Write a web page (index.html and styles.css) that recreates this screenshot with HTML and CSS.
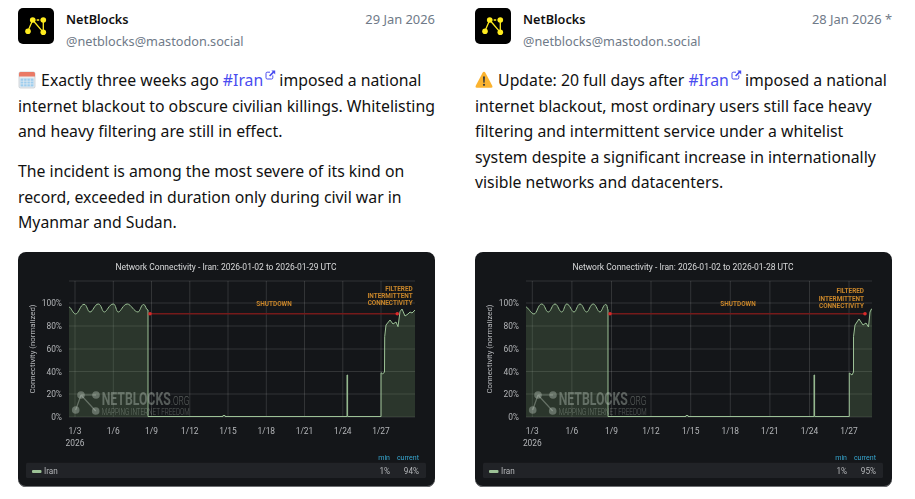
FILE: index.html
```html
<!DOCTYPE html>
<html lang="en">
<head>
  <meta charset="UTF-8" />
  <meta name="viewport" content="width=device-width, initial-scale=1.0"/>
  <title>NetBlocks posts</title>
  <link rel="stylesheet" href="styles.css">
</head>
<body>
  <svg class="defs" width="0" height="0" aria-hidden="true">
    <symbol id="nb-logo" viewBox="0 0 36 36">
      <rect width="36" height="36" rx="5" fill="#000"/>
      <path d="M14.7 12 10 23M14.7 12 25.3 24.3M25.3 12V24.3" stroke="#ffec1f" stroke-width="1.3" fill="none"/>
      <path d="M14.7 12H25.3" stroke="#ffec1f" stroke-width="1.3" stroke-dasharray="2.5 1.5" fill="none"/>
      <circle cx="14.7" cy="12" r="2.8" fill="#ffec1f"/>
      <circle cx="25.3" cy="12" r="2.8" fill="#ffec1f"/>
      <circle cx="10" cy="23.3" r="2.8" fill="#ffec1f"/>
      <circle cx="25.3" cy="24.3" r="2.8" fill="#ffec1f"/>
    </symbol>
    <symbol id="ext-link" viewBox="0 0 11 10">
      <path d="M5 2.2H2.2Q1 2.2 1 3.4V7.8Q1 9 2.2 9H6.6Q7.8 9 7.8 7.8V5.4" fill="none" stroke="currentColor" stroke-width="1"/>
      <path d="M6.4 .6H10.2V4.4L8.8 3 5.2 6.6 4 5.4 7.6 1.8Z" fill="currentColor"/>
    </symbol>
  </svg>

  <main class="posts">
    <article class="post">
      <header class="post-head">
        <svg class="avatar" width="36" height="36"><use href="#nb-logo"/></svg>
        <div class="who">
          <div class="name">NetBlocks</div>
          <div class="handle">@netblocks@mastodon.social</div>
        </div>
        <div class="date">29 Jan 2026</div>
      </header>
      <div class="post-body">
        <p>
          <svg class="emoji" width="18" height="18" viewBox="0 0 18 18">
            <rect x="1" y="1" width="16" height="16" rx="1.5" fill="#e8eef2" stroke="#b6bcc2" stroke-width=".6"/>
            <path d="M1 2.5Q1 1 2.5 1H15.5Q17 1 17 2.5V5.5H1Z" fill="#ea7a66"/>
            <path d="M2.5 7.5H15.5V15.5H2.5Z" fill="#9ccdee"/>
            <path d="M2.5 10.2H15.5M2.5 12.9H15.5M5.700 7.500V15.500M9 7.500V15.500M12.300 7.500V15.500" stroke="#e8eef2" stroke-width=".7"/>
          </svg>
          Exactly three weeks ago <a class="tag" href="#">#Iran<svg class="ext" width="11" height="10"><use href="#ext-link"/></svg></a> imposed a national internet blackout to obscure civilian killings. Whitelisting and heavy filtering are still in effect.
        </p>
        <p>The incident is among the most severe of its kind on record, exceeded in duration only during civil war in Myanmar and Sudan.</p>
      </div>
      <figure class="chart">
        <svg width="417" height="235" viewBox="0 0 417 235">
          <text class="title" x="208" y="18">Network Connectivity - Iran: 2026-01-02 to 2026-01-29 UTC</text>
          <path class="grid" d="M51 29H397M51 51H397M51 74H397M51 97H397M51 119.5H397M51 142H397M51 165H397M57 29V165M95.3 29V165M133.5 29V165M171.8 29V165M210 29V165M248.3 29V165M286.5 29V165M324.8 29V165M363 29V165"/>
          <path class="area" d="M51 55C53 55 55 62 57.7 62C60.5 62 62.5 52.3 66 52.3C69 52.3 69.5 60 72 60C75 60 76.5 52 80.3 52C83.5 52 84 60 86.3 60C89 60 91 52 95.3 52C98 52 98 60 100.3 60C103 60 105 52 109.3 52C113 52 116 60 120 60C122 60 123 52.5 125.5 52.5C128 52.5 127.5 58 130 58V165H51Z"/>
          <path class="area" d="M363 165V120.7L364.7 122 366.5 120 366.7 84.7 368 73 372 68 375 72 378 70 380 74.7 382 59.7 384 57 387 64 390 62 392 60 394 61 397 58V165Z"/>
          <path class="line" d="M51 55C53 55 55 62 57.7 62C60.5 62 62.5 52.3 66 52.3C69 52.3 69.5 60 72 60C75 60 76.5 52 80.3 52C83.5 52 84 60 86.3 60C89 60 91 52 95.3 52C98 52 98 60 100.3 60C103 60 105 52 109.3 52C113 52 116 60 120 60C122 60 123 52.5 125.5 52.5C128 52.5 127.5 58 130 58V164.5H205V163.5H207V164.5H329V123H329.6V164.5H363V120.7L364.7 122 366.5 120 366.7 84.7 368 73 372 68 375 72 378 70 380 74.7 382 59.7 384 57 387 64 390 62 392 60 394 61 397 58"/>
          <g class="mark">
            <circle cx="63" cy="143" r="3.8"/><circle cx="78" cy="143" r="3.8"/><circle cx="57.7" cy="158" r="3.8"/><circle cx="77.7" cy="159" r="3.8"/>
            <path class="mark-line" d="M63 143H78M63 143 57.7 158M63 143 77.7 159"/>
            <text class="mark-big" x="83.7" y="153" textLength="69" lengthAdjust="spacingAndGlyphs">NETBLOCKS</text>
            <text class="mark-org" x="153" y="153" textLength="18.5" lengthAdjust="spacingAndGlyphs">.ORG</text>
            <text class="mark-sub" x="83.7" y="163" textLength="88" lengthAdjust="spacingAndGlyphs">MAPPING INTERNET FREEDOM</text>
          </g>
          <path class="arrow" d="M132 61.7H379.3"/>
          <circle class="arrow-end" cx="132" cy="61.7" r="1.8"/>
          <circle class="arrow-end" cx="379.3" cy="61.7" r="1.8"/>
          <text class="note mid" x="256" y="54">SHUTDOWN</text>
          <text class="note end" x="394.7" y="39">FILTERED</text>
          <text class="note end" x="394.7" y="46.2">INTERMITTENT</text>
          <text class="note end" x="394.7" y="53.4">CONNECTIVITY</text>
          <text class="axis ytitle" transform="translate(16.5 97) rotate(-90)">Connectivity (normalized)</text>
          <text class="axis end" x="44" y="54">100%</text>
          <text class="axis end" x="44" y="77">80%</text>
          <text class="axis end" x="44" y="100">60%</text>
          <text class="axis end" x="44" y="122.5">40%</text>
          <text class="axis end" x="44" y="145">20%</text>
          <text class="axis end" x="44" y="168">0%</text>
          <text class="axis mid" x="57" y="182">1/3</text>
          <text class="axis mid" x="57" y="194">2026</text>
          <text class="axis mid" x="95.3" y="182">1/6</text>
          <text class="axis mid" x="133.5" y="182">1/9</text>
          <text class="axis mid" x="171.8" y="182">1/12</text>
          <text class="axis mid" x="210" y="182">1/15</text>
          <text class="axis mid" x="248.3" y="182">1/18</text>
          <text class="axis mid" x="286.5" y="182">1/21</text>
          <text class="axis mid" x="324.8" y="182">1/24</text>
          <text class="axis mid" x="363" y="182">1/27</text>
          <text class="stat-head end" x="372" y="208">min</text>
          <text class="stat-head end" x="401" y="208">current</text>
          <rect class="legend" x="8" y="210.7" width="400" height="15.3" rx="1.5"/>
          <rect class="swatch" x="14" y="218" width="9.5" height="3" rx="1"/>
          <text class="legend-text" x="26" y="221.5">Iran</text>
          <text class="legend-text end" x="372" y="221.5">1%</text>
          <text class="legend-text end" x="401" y="221.5">94%</text>
        </svg>
      </figure>
    </article>

    <article class="post">
      <header class="post-head">
        <svg class="avatar" width="36" height="36"><use href="#nb-logo"/></svg>
        <div class="who">
          <div class="name">NetBlocks</div>
          <div class="handle">@netblocks@mastodon.social</div>
        </div>
        <div class="date">28 Jan 2026 *</div>
      </header>
      <div class="post-body">
        <p>
          <svg class="emoji" width="18" height="18" viewBox="0 0 18 18">
            <path d="M9 .8Q9.9 .8 10.4 1.7L17.4 15Q18 16.6 16.3 16.8H1.7Q0 16.6 .6 15L7.6 1.7Q8.1 .8 9 .8Z" fill="#fbb32f"/>
            <path d="M8 5.5H10L9.6 11.8H8.4Z" fill="#31373d"/>
            <circle cx="9" cy="13.8" r="1.1" fill="#31373d"/>
          </svg>
          Update: 20 full days after <a class="tag" href="#">#Iran<svg class="ext" width="11" height="10"><use href="#ext-link"/></svg></a> imposed a national internet blackout, most ordinary users still face heavy filtering and intermittent service under a whitelist system despite a significant increase in internationally visible networks and datacenters.
        </p>
      </div>
      <figure class="chart">
        <svg width="417" height="235" viewBox="0 0 417 235">
          <text class="title" x="208" y="18">Network Connectivity - Iran: 2026-01-02 to 2026-01-28 UTC</text>
          <path class="grid" d="M51 29H397M51 51H397M51 74H397M51 97H397M51 119.5H397M51 142H397M51 165H397M57.3 29V165M96.9 29V165M136.5 29V165M176 29V165M215.7 29V165M255.3 29V165M294.9 29V165M334.5 29V165M374 29V165"/>
          <path class="area" d="M51 55C53 55 56 62 59 62C62 62 63 52 66.7 52C70 52 70.5 60 73.3 60C76 60 77 52 80 52C83 52 84 60 86.7 60C89 60 89.5 52 91.7 52C95 52 96.5 60 99 60C101.5 60 102 52 105 52C108 52 109 60 111.7 60C114 60 115 52 118.3 52C121 52 122.5 60 125 60C127 60 128 52.5 130.7 52.5C132.5 52.5 132 56 133 58V165H51Z"/>
          <path class="area" d="M374.3 165V121L377 123 378.5 120 378.5 84.7 380 73 384 67 388 73 391 71 393.5 75 395 60 396.5 57 397 57V165Z"/>
          <path class="line" d="M51 55C53 55 56 62 59 62C62 62 63 52 66.7 52C70 52 70.5 60 73.3 60C76 60 77 52 80 52C83 52 84 60 86.7 60C89 60 89.5 52 91.7 52C95 52 96.5 60 99 60C101.5 60 102 52 105 52C108 52 109 60 111.7 60C114 60 115 52 118.3 52C121 52 122.5 60 125 60C127 60 128 52.5 130.7 52.5C132.5 52.5 132 56 133 58V164.5H211V163.5H213V164.5H339V123H339.6V164.5H374.3V121L377 123 378.5 120 378.5 84.7 380 73 384 67 388 73 391 71 393.5 75 395 60 396.5 57 397 57"/>
          <g class="mark">
            <circle cx="63" cy="143" r="3.8"/><circle cx="78" cy="143" r="3.8"/><circle cx="57.7" cy="158" r="3.8"/><circle cx="77.7" cy="159" r="3.8"/>
            <path class="mark-line" d="M63 143H78M63 143 57.7 158M63 143 77.7 159"/>
            <text class="mark-big" x="83.7" y="153" textLength="69" lengthAdjust="spacingAndGlyphs">NETBLOCKS</text>
            <text class="mark-org" x="153" y="153" textLength="18.5" lengthAdjust="spacingAndGlyphs">.ORG</text>
            <text class="mark-sub" x="83.7" y="163" textLength="88" lengthAdjust="spacingAndGlyphs">MAPPING INTERNET FREEDOM</text>
          </g>
          <path class="arrow" d="M135 61.7H390"/>
          <circle class="arrow-end" cx="135" cy="61.7" r="1.8"/>
          <circle class="arrow-end" cx="390" cy="61.7" r="1.8"/>
          <text class="note mid" x="263" y="54">SHUTDOWN</text>
          <text class="note end" x="389" y="41.3">FILTERED</text>
          <text class="note end" x="389" y="48.5">INTERMITTENT</text>
          <text class="note end" x="389" y="55.7">CONNECTIVITY</text>
          <text class="axis ytitle" transform="translate(16.5 97) rotate(-90)">Connectivity (normalized)</text>
          <text class="axis end" x="44" y="54">100%</text>
          <text class="axis end" x="44" y="77">80%</text>
          <text class="axis end" x="44" y="100">60%</text>
          <text class="axis end" x="44" y="122.5">40%</text>
          <text class="axis end" x="44" y="145">20%</text>
          <text class="axis end" x="44" y="168">0%</text>
          <text class="axis mid" x="57.3" y="182">1/3</text>
          <text class="axis mid" x="57.3" y="194">2026</text>
          <text class="axis mid" x="96.9" y="182">1/6</text>
          <text class="axis mid" x="136.5" y="182">1/9</text>
          <text class="axis mid" x="176" y="182">1/12</text>
          <text class="axis mid" x="215.7" y="182">1/15</text>
          <text class="axis mid" x="255.3" y="182">1/18</text>
          <text class="axis mid" x="294.9" y="182">1/21</text>
          <text class="axis mid" x="334.5" y="182">1/24</text>
          <text class="axis mid" x="374" y="182">1/27</text>
          <text class="stat-head end" x="372" y="208">min</text>
          <text class="stat-head end" x="401" y="208">current</text>
          <rect class="legend" x="8" y="210.7" width="400" height="15.3" rx="1.5"/>
          <rect class="swatch" x="14" y="218" width="9.5" height="3" rx="1"/>
          <text class="legend-text" x="26" y="221.5">Iran</text>
          <text class="legend-text end" x="372" y="221.5">1%</text>
          <text class="legend-text end" x="401" y="221.5">95%</text>
        </svg>
      </figure>
    </article>
  </main>
</body>
</html>
```

FILE: styles.css
```css
* { box-sizing: border-box; margin: 0; padding: 0; }

body {
  font-family: 'Noto Sans', sans-serif;
  background-color: #fff;
  color: #111;
  overflow: hidden;
}

.defs { position: absolute; }

.posts {
  display: grid;
  grid-template-columns: 417px 417px;
  gap: 40px;
  padding: 8px 0 0 18px;
}

.post {
  display: flex;
  flex-direction: column;
}

.post-head {
  display: flex;
  gap: 12px;
  height: 36px;
}

.avatar { flex: none; }

.who {
  flex: 1;
  padding-top: 1px;
}

.name {
  font-size: 12.7px;
  font-weight: 600;
  line-height: 20px;
  color: #111;
}

.handle {
  font-size: 12.7px;
  line-height: 20px;
  margin-top: 2px;
  color: #6f7a88;
}

.date {
  font-size: 12.9px;
  line-height: 20px;
  padding-top: 1px;
  color: #6f7a88;
}

.post-body {
  padding: 24px 0 16px;
  font-size: 15.8px;
  line-height: 25.6px;
}

.post-body p { margin-bottom: 14.4px; }
.post-body p:last-child { margin-bottom: 0; }

.emoji {
  margin-right: 1px;
  vertical-align: -3px;
}

.tag {
  color: #4a4cf0;
  text-decoration: none;
}

.ext {
  margin-left: 2px;
  margin-right: -1px;
  vertical-align: 6px;
  color: #4a4cf0;
}

.chart {
  margin-top: auto;
  width: 417px;
  height: 235px;
  background-color: #141619;
  border-radius: 8px;
  overflow: hidden;
  box-shadow: inset 0 -1px 0 #6d6f72;
}

.chart svg {
  display: block;
  filter: blur(0.3px);
  font-family: Roboto, sans-serif;
}

.title {
  font-size: 8.5px;
  fill: #d8d9da;
  text-anchor: middle;
}

.grid {
  fill: none;
  stroke: rgba(255, 255, 255, 0.13);
  stroke-width: 1;
}

.area { fill: rgba(115, 160, 105, 0.24); }

.line {
  fill: none;
  stroke: #9cc196;
  stroke-width: 1;
}

.mark { fill: rgba(205, 215, 205, 0.36); }

.mark-line {
  fill: none;
  stroke: rgba(205, 215, 205, 0.36);
  stroke-width: 1.2;
}

.mark-big { font-size: 18.5px; font-weight: 700; }
.mark-org { font-size: 13px; font-weight: 300; }
.mark-sub { font-size: 9.5px; font-weight: 300; }

.arrow {
  fill: none;
  stroke: #751a1a;
  stroke-width: 1.4;
}

.arrow-end { fill: #d92b2b; }

.note {
  font-size: 6.4px;
  font-weight: 700;
  fill: #c9862a;
}

.axis {
  font-size: 8.4px;
  fill: #b4b6b9;
}

.ytitle {
  font-size: 7.85px;
  text-anchor: middle;
}

.mid { text-anchor: middle; }
.end { text-anchor: end; }

.stat-head {
  font-size: 7px;
  fill: #37a7d0;
}

.legend { fill: #212327; }
.swatch { fill: #9cc196; }

.legend-text {
  font-size: 8.2px;
  fill: #b4b6b9;
}
```
